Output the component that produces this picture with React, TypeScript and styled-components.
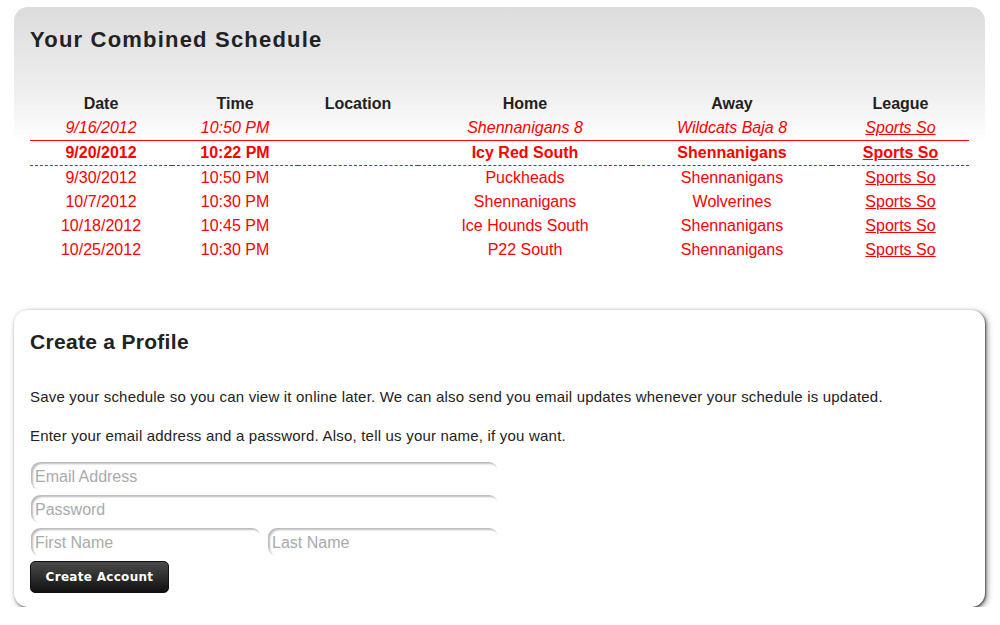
import styled, { createGlobalStyle } from 'styled-components';

const GlobalStyle = createGlobalStyle`
    body {
        margin: 0;
        background: #ffffff;
        font-family: "Liberation Sans", Arial, sans-serif;
        color: #222222;
    }
`;

const Page = styled.div`
    width: 1000px;
    padding: 7px 15px 0 14px;
    box-sizing: border-box;
    display: flex;
    flex-direction: column;
    gap: 22px;
`;

const SchedulePanel = styled.section`
    border-radius: 14px 14px 0 0;
    background: linear-gradient(#dcdcdc 0px, #f0f0f0 90px, #ffffff 135px);
    padding: 20px 16px 26px 16px;
`;

const Title = styled.h2`
    margin: 0;
    font-size: 22px;
    line-height: 26px;
    font-weight: bold;
    letter-spacing: 1.2px;
    color: #222222;
`;

const Table = styled.table`
    margin-top: 38px;
    width: 939px;
    border-collapse: collapse;
    table-layout: fixed;
`;

const HeadCell = styled.th<{ $w: number }>`
    width: ${p => p.$w}px;
    font-size: 16px;
    font-weight: bold;
    color: #222222;
    text-align: center;
    height: 25px;
    padding: 0;
`;

const Row = styled.tr<{ $kind: 'past' | 'next' | 'future' }>`
    color: #ff0000;
    font-style: ${p => (p.$kind === 'past' ? 'italic' : 'normal')};
    font-weight: ${p => (p.$kind === 'next' ? 'bold' : 'normal')};
    border-bottom: ${p =>
        p.$kind === 'past' ? '1px solid #ff0000' : p.$kind === 'next' ? '1px dashed #ff0000' : 'none'};
`;

const Cell = styled.td`
    font-size: 16px;
    text-align: center;
    height: 24px;
    padding: 0;
    white-space: nowrap;
`;

const LeagueLink = styled.a`
    color: #ff0000;
    text-decoration: underline;
`;

const ProfileCard = styled.section`
    border-radius: 14px;
    background: #ffffff;
    box-shadow: 1px 1px 2px #555555, 2px 2px 6px rgba(0, 0, 0, 0.45);
    padding: 19px 16px 14px 16px;
`;

const SubTitle = styled.h3`
    margin: 0 0 34px 0;
    font-size: 21px;
    line-height: 25px;
    font-weight: bold;
    letter-spacing: 0.3px;
    color: #222222;
`;

const Text = styled.p`
    margin: 0 0 22px 0;
    font-size: 15px;
    line-height: 17px;
    letter-spacing: 0.2px;
    color: #222222;
`;

const Form = styled.form`
    width: 468px;
    display: flex;
    flex-direction: column;
    gap: 5px;
    margin-top: -4px;
`;

const FieldRow = styled.div`
    display: flex;
    gap: 6px;
`;

const Field = styled.input<{ $half?: boolean }>`
    flex: ${p => (p.$half ? '1' : 'none')};
    min-width: 0;
    height: 28px;
    margin-left: 1px;
    border: none;
    border-radius: 9px;
    box-shadow: inset 2px 2px 2px #bbbbbb;
    padding: 2px 0 0 4px;
    box-sizing: border-box;
    font-family: "Liberation Sans", Arial, sans-serif;
    font-size: 16px;
    color: #222222;
    outline: none;
    &::placeholder {
        color: #aaaaaa;
    }
`;

const Button = styled.button`
    align-self: flex-start;
    width: 139px;
    height: 32px;
    border: 1px solid #111111;
    border-radius: 5px;
    background: linear-gradient(#4a4a4a, #111111);
    color: #ffffff;
    font-family: "DejaVu Sans", Verdana, sans-serif;
    font-size: 12px;
    font-weight: bold;
    letter-spacing: 0.3px;
    cursor: pointer;
`;

const columns = [
    { name: 'Date', width: 142 },
    { name: 'Time', width: 126 },
    { name: 'Location', width: 120 },
    { name: 'Home', width: 214 },
    { name: 'Away', width: 200 },
    { name: 'League', width: 137 },
];

const games: { date: string; time: string; home: string; away: string; kind: 'past' | 'next' | 'future' }[] = [
    { date: '9/16/2012', time: '10:50 PM', home: 'Shennanigans 8', away: 'Wildcats Baja 8', kind: 'past' },
    { date: '9/20/2012', time: '10:22 PM', home: 'Icy Red South', away: 'Shennanigans', kind: 'next' },
    { date: '9/30/2012', time: '10:50 PM', home: 'Puckheads', away: 'Shennanigans', kind: 'future' },
    { date: '10/7/2012', time: '10:30 PM', home: 'Shennanigans', away: 'Wolverines', kind: 'future' },
    { date: '10/18/2012', time: '10:45 PM', home: 'Ice Hounds South', away: 'Shennanigans', kind: 'future' },
    { date: '10/25/2012', time: '10:30 PM', home: 'P22 South', away: 'Shennanigans', kind: 'future' },
];

const App = () => {
    return (
        <>
            <GlobalStyle />
            <Page>
                <SchedulePanel>
                    <Title>Your Combined Schedule</Title>
                    <Table>
                        <thead>
                            <tr>
                                {columns.map(col => (
                                    <HeadCell key={col.name} $w={col.width}>{col.name}</HeadCell>
                                ))}
                            </tr>
                        </thead>
                        <tbody>
                            {games.map(game => (
                                <Row key={game.date} $kind={game.kind}>
                                    <Cell>{game.date}</Cell>
                                    <Cell>{game.time}</Cell>
                                    <Cell></Cell>
                                    <Cell>{game.home}</Cell>
                                    <Cell>{game.away}</Cell>
                                    <Cell><LeagueLink href="#">Sports So</LeagueLink></Cell>
                                </Row>
                            ))}
                        </tbody>
                    </Table>
                </SchedulePanel>

                <ProfileCard>
                    <SubTitle>Create a Profile</SubTitle>
                    <Text>Save your schedule so you can view it online later. We can also send you email updates whenever your schedule is updated.</Text>
                    <Text>Enter your email address and a password. Also, tell us your name, if you want.</Text>
                    <Form onSubmit={e => e.preventDefault()}>
                        <Field type="email" placeholder="Email Address" />
                        <Field type="password" placeholder="Password" />
                        <FieldRow>
                            <Field $half type="text" placeholder="First Name" />
                            <Field $half type="text" placeholder="Last Name" />
                        </FieldRow>
                        <Button type="submit">Create Account</Button>
                    </Form>
                </ProfileCard>
            </Page>
        </>
    );
};

export default App;
